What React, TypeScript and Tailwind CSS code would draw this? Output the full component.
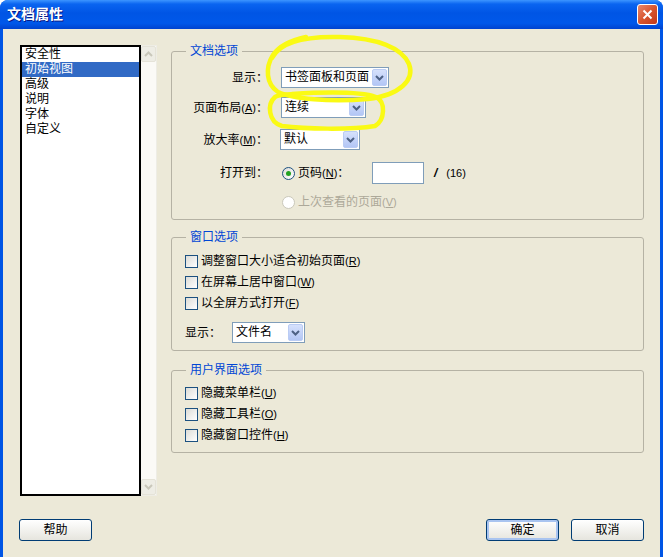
import React from "react";

const FONT = "font-['Liberation_Sans','Noto_Sans_CJK_SC',sans-serif]";

function Mn({ k }: { k: string }) {
  return (
    <span className="text-[11px]">
      (<span className="underline">{k}</span>)
    </span>
  );
}

function Chevron({ color = "#4D6185" }: { color?: string }) {
  return (
    <svg width="9" height="6" viewBox="0 0 9 6">
      <path d="M1 1 L4.5 4.5 L8 1" stroke={color} strokeWidth="2" fill="none" />
    </svg>
  );
}

function Combo({ text, w }: { text: string; w: string }) {
  return (
    <div className={`${w} h-[21px] border border-[#7F9DB9] bg-white flex items-center p-[1px]`}>
      <span className="flex-1 pl-[2px] text-[12px] leading-[17px] whitespace-nowrap overflow-visible">{text}</span>
      <div className="w-[15px] shrink-0 h-[17px] rounded-[2px] border border-[#BACCF4] bg-gradient-to-b from-[#D6E1FC] to-[#B3C6F5] flex items-center justify-center">
        <Chevron />
      </div>
    </div>
  );
}

function Check({ children }: { children: React.ReactNode }) {
  return (
    <div className="h-[16px] flex items-center gap-[3px] text-[12px] leading-[16px]">
      <div className="w-[13px] h-[13px] border border-[#1C5180] bg-gradient-to-br from-[#DCDCD7] to-white" />
      <span>{children}</span>
    </div>
  );
}

function Radio({ checked, disabled, children }: { checked?: boolean; disabled?: boolean; children: React.ReactNode }) {
  return (
    <div className={`h-[16px] flex items-center gap-[3px] text-[12px] leading-[16px] ${disabled ? "text-[#ACA899]" : ""}`}>
      <div
        className={`w-[13px] h-[13px] rounded-full border flex items-center justify-center ${
          disabled ? "border-[#CAC8BB] bg-white" : "border-[#1C5180] bg-gradient-to-br from-[#DCDCD7] to-white"
        }`}
      >
        {checked && <div className="w-[5px] h-[5px] rounded-full bg-[#21A121]" />}
      </div>
      <span>{children}</span>
    </div>
  );
}

function XpButton({ label, def }: { label: string; def?: boolean }) {
  return (
    <div
      className={`w-[73px] h-[22px] rounded-[3px] border border-[#003C74] bg-gradient-to-b from-white to-[#E6E5DE] flex items-center justify-center text-[12px] ${
        def ? "shadow-[inset_0_0_0_2px_#A9C4F0]" : ""
      }`}
    >
      {label}
    </div>
  );
}

function Legend({ text }: { text: string }) {
  return <legend className="ml-[14px] px-[4px] text-[12px] leading-[14px] text-[#0046D5]">{text}</legend>;
}

export default function App() {
  const items = ["安全性", "初始视图", "高级", "说明", "字体", "自定义"];
  return (
    <div className={`relative w-[663px] h-[557px] overflow-hidden flex flex-col bg-[#0055E5] rounded-t-[8px] text-black ${FONT}`}>
      {/* title bar */}
      <div className="h-[29px] shrink-0 flex items-center justify-between pl-[7px] pr-[5px] bg-[linear-gradient(to_bottom,#3D95FF_0%,#0A64F0_14%,#0055E5_45%,#0058EA_80%,#0043CF_100%)]">
        <span className="text-white text-[14px] font-bold [text-shadow:1px_1px_0_#0A1883]">文档属性</span>
        <div className="w-[21px] h-[21px] rounded-[3px] border border-white bg-gradient-to-br from-[#E8876A] via-[#D8552E] to-[#C1381A] flex items-center justify-center">
          <svg width="11" height="11" viewBox="0 0 11 11">
            <path d="M1.5 1.5 L9.5 9.5 M9.5 1.5 L1.5 9.5" stroke="white" strokeWidth="2" />
          </svg>
        </div>
      </div>

      {/* body */}
      <div className="flex-1 mx-[3px] bg-[#ECE9D8] flex flex-col">
        <div className="flex items-start pt-[15px] pl-[17px] gap-[14px]">
          {/* list */}
          <div className="mt-[1px] w-[137px] h-[451px] flex">
            <div className="w-[121px] h-full border-2 border-black bg-white text-[12px] leading-[15px]">
              {items.map((it, i) => (
                <div key={it} className={`h-[15px] pl-[3px] ${i === 1 ? "bg-[#316AC5] text-white" : ""}`}>
                  {it}
                </div>
              ))}
            </div>
            <div className="w-[16px] h-full bg-[#FBFAF6] border border-l-0 border-[#EEEDE5] flex flex-col justify-between">
              <div className="h-[16px] rounded-[2px] bg-[#EEEDE5] border border-[#E5E3D8] flex items-center justify-center">
                <div className="rotate-180">
                  <Chevron color="#C9C7BA" />
                </div>
              </div>
              <div className="h-[16px] rounded-[2px] bg-[#EEEDE5] border border-[#E5E3D8] flex items-center justify-center">
                <Chevron color="#C9C7BA" />
              </div>
            </div>
          </div>

          {/* groups */}
          <div className="w-[473px] flex flex-col">
            <fieldset className="h-[176px] border border-[#B5B2A4] rounded-[3px]">
              <Legend text="文档选项" />
              <div className="flex flex-col pt-[9px] text-[12px]">
                <div className="flex items-center">
                  <span className="w-[96px] text-right">显示：</span>
                  <div className="ml-[13px]">
                    <Combo text="书签面板和页面" w="w-[108px]" />
                  </div>
                </div>
                <div className="flex items-center mt-[9px]">
                  <span className="w-[96px] text-right">
                    页面布局<Mn k="A" />：
                  </span>
                  <div className="ml-[13px]">
                    <Combo text="连续" w="w-[85px]" />
                  </div>
                </div>
                <div className="flex items-center mt-[11px]">
                  <span className="w-[96px] text-right">
                    放大率<Mn k="M" />：
                  </span>
                  <div className="ml-[12px]">
                    <Combo text="默认" w="w-[80px]" />
                  </div>
                </div>
                <div className="flex items-center mt-[12px] h-[22px]">
                  <span className="w-[96px] text-right">打开到：</span>
                  <div className="ml-[14px] w-[90px]">
                    <Radio checked>
                      页码<Mn k="N" />：
                    </Radio>
                  </div>
                  <div className="w-[52px] h-[22px] border border-[#7F9DB9] bg-white" />
                  <span className="ml-[10px] font-bold text-[12px] italic">/</span>
                  <span className="ml-[9px] text-[11px]">(16)</span>
                </div>
                <div className="flex items-center mt-[10px]">
                  <div className="ml-[110px]">
                    <Radio disabled>
                      上次查看的页面<Mn k="V" />
                    </Radio>
                  </div>
                </div>
              </div>
            </fieldset>

            <fieldset className="mt-[10px] h-[121px] border border-[#B5B2A4] rounded-[3px]">
              <Legend text="窗口选项" />
              <div className="flex flex-col gap-[5px] pt-[9px] pl-[13px]">
                <Check>
                  调整窗口大小适合初始页面<Mn k="R" />
                </Check>
                <Check>
                  在屏幕上居中窗口<Mn k="W" />
                </Check>
                <Check>
                  以全屏方式打开<Mn k="F" />
                </Check>
                <div className="flex items-center mt-[6px] text-[12px]">
                  <span>显示：</span>
                  <div className="ml-[11px]">
                    <Combo text="文件名" w="w-[73px]" />
                  </div>
                </div>
              </div>
            </fieldset>

            <fieldset className="mt-[12px] h-[90px] border border-[#B5B2A4] rounded-[3px]">
              <Legend text="用户界面选项" />
              <div className="flex flex-col gap-[5px] pt-[8px] pl-[13px]">
                <Check>
                  隐藏菜单栏<Mn k="U" />
                </Check>
                <Check>
                  隐藏工具栏<Mn k="O" />
                </Check>
                <Check>
                  隐藏窗口控件<Mn k="H" />
                </Check>
              </div>
            </fieldset>
          </div>
        </div>

        {/* buttons */}
        <div className="flex items-center mt-[23px] px-[16px]">
          <XpButton label="帮助" />
          <div className="flex-1" />
          <XpButton label="确定" def />
          <div className="ml-[12px]">
            <XpButton label="取消" />
          </div>
        </div>
      </div>

      {/* yellow hand-drawn annotations */}
      <svg className="absolute inset-0 pointer-events-none" width="663" height="557" viewBox="0 0 663 557">
        <path
          d="M272 58 C280 42, 305 36, 340 37 C378 38, 402 48, 409 64 C415 80, 400 95, 368 99 C330 102, 292 99, 278 92 C266 84, 265 68, 273 55 C279 46, 292 40, 306 37"
          stroke="#FAFA14"
          strokeWidth="4.5"
          fill="none"
          strokeLinecap="round"
        />
        <path
          d="M292 94 C325 92, 362 92, 376 97 C386 102, 385 120, 375 126 C350 130, 305 129, 282 126 C268 122, 267 104, 275 97 C280 94, 290 94, 300 94"
          stroke="#FAFA14"
          strokeWidth="4.5"
          fill="none"
          strokeLinecap="round"
        />
      </svg>
    </div>
  );
}
